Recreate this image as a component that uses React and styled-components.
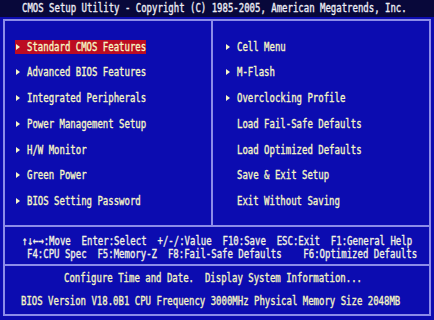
import React from "react";
import styled, { createGlobalStyle } from "styled-components";

const Global = createGlobalStyle`
  html, body {
    margin: 0;
    padding: 0;
    background: #0c0cb0;
  }
  #root {
    width: 434px;
    height: 320px;
  }
`;

const Screen = styled.div`
  width: 434px;
  height: 320px;
  display: flex;
  flex-direction: column;
  background: #0c0cb0;
  font-family: "DejaVu Sans Mono", "Liberation Mono", monospace;
  font-size: 12px;
  font-weight: normal;
  overflow: hidden;
`;

const Glyphs = styled.span`
  display: inline-block;
  white-space: pre;
  transform: scaleX(0.75);
  transform-origin: 0 50%;
  margin-right: ${(p) => -p.$len * 0.25}ch;
  -webkit-text-stroke: 0.35px currentColor;
`;

const Txt = ({ children }) => <Glyphs $len={children.length}>{children}</Glyphs>;

const TitleBar = styled.div`
  height: 17px;
  flex: none;
  display: flex;
  align-items: center;
  padding-left: 22px;
  background: #08083a;
  color: #ececf4;
  line-height: 17px;
`;

const Frame = styled.div`
  margin: 2px 3px 4px 3px;
  border: 2px solid #8c8ce8;
  flex: 1;
  display: grid;
  grid-template-rows: 206px 39px 1fr;
`;

const MenuArea = styled.div`
  display: grid;
  grid-template-columns: 208px 1fr;
  border-bottom: 2px solid #8c8ce8;
`;

const Column = styled.div`
  display: flex;
  flex-direction: column;
  gap: 11.8px;
  padding-top: 18.5px;
  padding-left: ${(p) => p.$indent}px;
  border-right: ${(p) => (p.$divider ? "2px solid #8c8ce8" : "none")};
`;

const Item = styled.div`
  display: flex;
  align-items: center;
  height: 14px;
  line-height: 14px;
  width: fit-content;
  padding-left: 1px;
  color: #f6f6c6;
  background: ${(p) => (p.$active ? "#bc0c22" : "transparent")};
`;

const Arrow = styled.svg`
  width: 4px;
  height: 6px;
  margin-right: 7px;
  flex: none;
  visibility: ${(p) => (p.$hidden ? "hidden" : "visible")};
`;

const HelpArea = styled.div`
  display: flex;
  flex-direction: column;
  padding-top: 7.5px;
  border-bottom: 2px solid #8c8ce8;
`;

const HelpLine = styled.div`
  height: 13px;
  line-height: 13px;
  padding-left: ${(p) => p.$indent}px;
  color: #f2f2e2;
`;

const InfoArea = styled.div`
  display: flex;
  flex-direction: column;
  gap: 9px;
  padding-top: 5px;
`;

const InfoLine = styled.div`
  height: 14px;
  line-height: 14px;
  padding-left: ${(p) => p.$indent}px;
  color: #f4f4c4;
`;

const MenuItem = ({ label, arrow = true, active = false }) => (
  <Item $active={active}>
    <Arrow viewBox="0 0 4 6" $hidden={!arrow}>
      <polygon points="0,0 4,3 0,6" fill="#f6f6c6" />
    </Arrow>
    <Txt>{label}</Txt>
  </Item>
);

const left = [
  { label: "Standard CMOS Features", active: true },
  { label: "Advanced BIOS Features" },
  { label: "Integrated Peripherals" },
  { label: "Power Management Setup" },
  { label: "H/W Monitor" },
  { label: "Green Power" },
  { label: "BIOS Setting Password" },
];

const right = [
  { label: "Cell Menu" },
  { label: "M-Flash" },
  { label: "Overclocking Profile" },
  { label: "Load Fail-Safe Defaults", arrow: false },
  { label: "Load Optimized Defaults", arrow: false },
  { label: "Save & Exit Setup", arrow: false },
  { label: "Exit Without Saving", arrow: false },
];

export default function App() {
  return (
    <>
      <Global />
      <Screen>
        <TitleBar>
          <Txt>CMOS Setup Utility - Copyright (C) 1985-2005, American Megatrends, Inc.</Txt>
        </TitleBar>
        <Frame>
          <MenuArea>
            <Column $indent={10} $divider>
              {left.map((it) => (
                <MenuItem key={it.label} {...it} />
              ))}
            </Column>
            <Column $indent={12}>
              {right.map((it) => (
                <MenuItem key={it.label} {...it} />
              ))}
            </Column>
          </MenuArea>
          <HelpArea>
            <HelpLine $indent={17}>
              <Txt>↑↓←→:Move  Enter:Select  +/-/:Value  F10:Save  ESC:Exit  F1:General Help</Txt>
            </HelpLine>
            <HelpLine $indent={22}>
              <Txt>F4:CPU Spec  F5:Memory-Z  F8:Fail-Safe Defaults    F6:Optimized Defaults</Txt>
            </HelpLine>
          </HelpArea>
          <InfoArea>
            <InfoLine $indent={59}>
              <Txt>Configure Time and Date.  Display System Information...</Txt>
            </InfoLine>
            <InfoLine $indent={16}>
              <Txt>BIOS Version V18.0B1 CPU Frequency 3000MHz Physical Memory Size 2048MB</Txt>
            </InfoLine>
          </InfoArea>
        </Frame>
      </Screen>
    </>
  );
}
